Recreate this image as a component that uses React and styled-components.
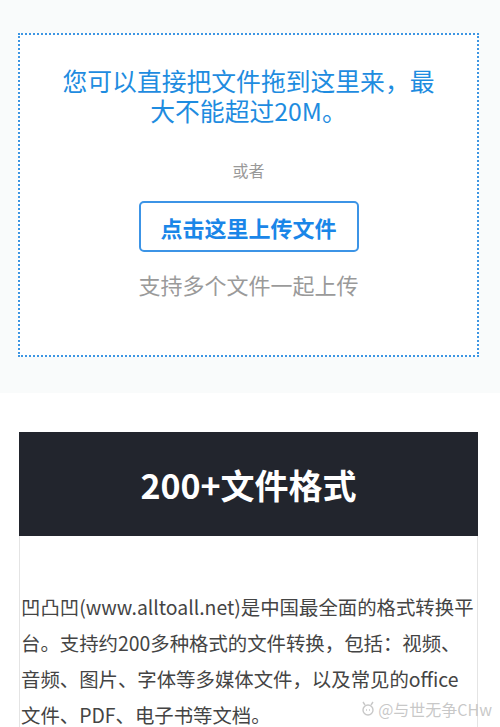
import React from "react";
import styled, { createGlobalStyle } from "styled-components";

const GlobalStyle = createGlobalStyle`
  body {
    margin: 0;
    background: #ffffff;
    font-family: "Noto Sans CJK SC", "Noto Sans", sans-serif;
  }
`;

const Page = styled.div`
  position: relative;
  width: 500px;
  min-height: 727px;
`;

const UploadSection = styled.section`
  background: #f9fbfb;
  padding: 33px 21px 36px 18px;
`;

const DropZone = styled.div`
  border: 2px dotted #3d96e3;
  background: #ffffff;
  padding: 30px 38px 56px;
  display: flex;
  flex-direction: column;
  align-items: center;
  text-align: center;
`;

const Title = styled.p`
  margin: 0;
  font-size: 24.8px;
  line-height: 30px;
  color: #1e8ce0;
`;

const Or = styled.p`
  margin: 33px 0 0;
  font-size: 16px;
  line-height: 24px;
  color: #999999;
`;

const UploadButton = styled.button`
  margin-top: 19px;
  width: 220px;
  height: 51px;
  border: 2px solid #3c94e6;
  border-radius: 5px;
  background: #ffffff;
  color: #1a86e8;
  font-family: inherit;
  font-size: 22px;
  font-weight: 700;
  cursor: pointer;
`;

const Hint = styled.p`
  margin: 17px 0 0;
  font-size: 22px;
  line-height: 30px;
  color: #9a9a9a;
`;

const Card = styled.article`
  margin: 39px 22px 0 19px;
`;

const CardHeader = styled.h2`
  margin: 0;
  height: 104px;
  display: flex;
  align-items: center;
  justify-content: center;
  background: #22252d;
  color: #ffffff;
  font-size: 34px;
  font-weight: 700;
`;

const CardBody = styled.div`
  border-left: 1px solid #e4e4e4;
  border-right: 1px solid #e4e4e4;
  padding: 53px 0 20px 1px;
`;

const Paragraph = styled.p`
  margin: 0;
  font-size: 19.4px;
  line-height: 36px;
  color: #444444;
`;

const Watermark = styled.div`
  position: absolute;
  right: 8px;
  top: 697px;
  display: flex;
  align-items: center;
  gap: 2px;
  font-size: 16px;
  color: rgba(190, 190, 190, 0.85);
`;

function WatermarkIcon() {
  return (
    <svg width="16" height="16" viewBox="0 0 16 16" fill="none" stroke="currentColor" strokeWidth="1.4">
      <circle cx="8" cy="9" r="5" />
      <path d="M5 4 L3 1 M11 4 L13 1 M6 9 h1 M9 9 h1" />
    </svg>
  );
}

export default function App() {
  return (
    <Page>
      <GlobalStyle />
      <UploadSection>
        <DropZone>
          <Title>您可以直接把文件拖到这里来，最大不能超过20M。</Title>
          <Or>或者</Or>
          <UploadButton>点击这里上传文件</UploadButton>
          <Hint>支持多个文件一起上传</Hint>
        </DropZone>
      </UploadSection>
      <Card>
        <CardHeader>200+文件格式</CardHeader>
        <CardBody>
          <Paragraph>
            凹凸凹(www.alltoall.net)是中国最全面的格式转换平台。支持约200多种格式的文件转换，包括：视频、音频、图片、字体等多媒体文件，以及常见的office文件、PDF、电子书等文档。
          </Paragraph>
        </CardBody>
      </Card>
      <Watermark>
        <WatermarkIcon />
        @与世无争CHw
      </Watermark>
    </Page>
  );
}
